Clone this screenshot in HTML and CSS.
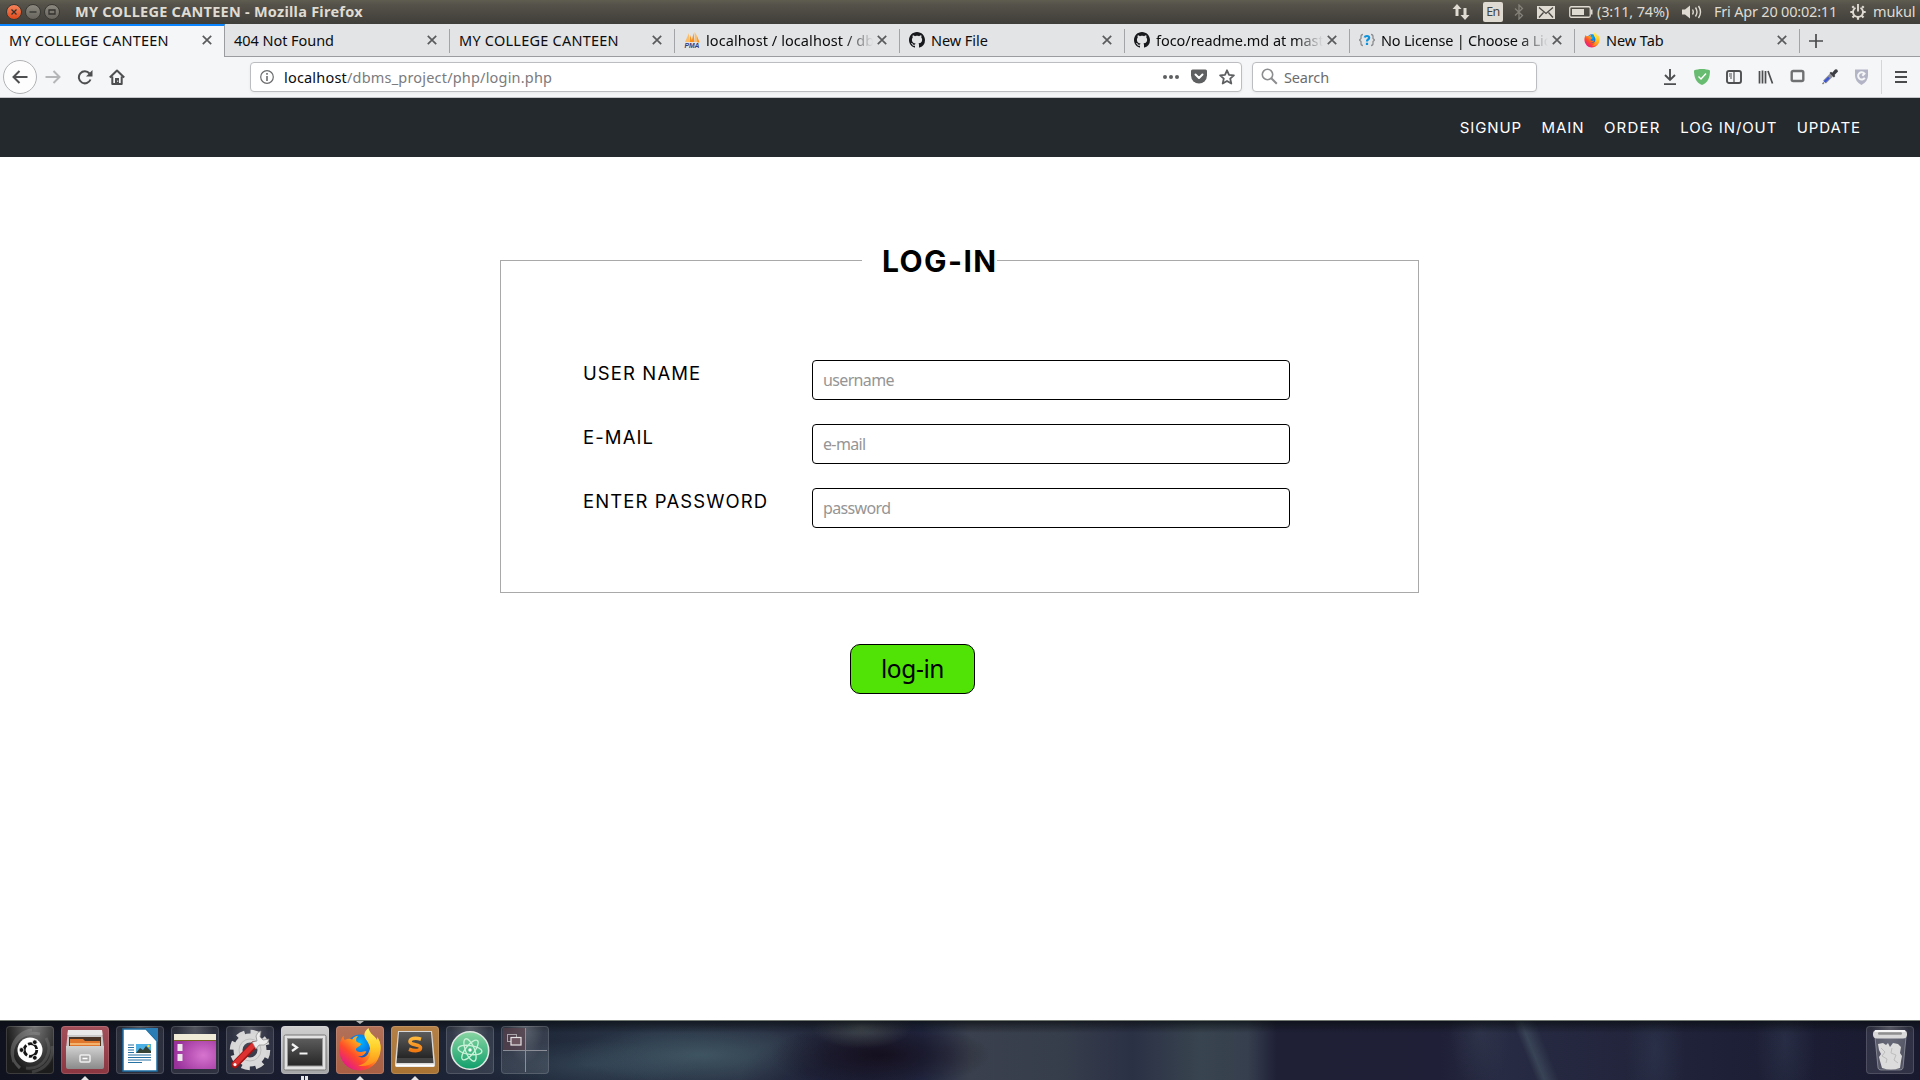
FILE: index.html
```html
<!DOCTYPE html>
<html lang="en">
<head>
<meta charset="utf-8">
<title>MY COLLEGE CANTEEN</title>
<link rel="stylesheet" href="styles.css">
</head>
<body>
<svg class="defs" width="0" height="0" aria-hidden="true">
  <defs>
    <linearGradient id="fox" x1=".85" y1=".1" x2=".15" y2=".8"><stop offset="0" stop-color="#ffe03a"/><stop offset=".4" stop-color="#ff9a1e"/><stop offset=".7" stop-color="#ff4a2a"/><stop offset="1" stop-color="#e8207c"/></linearGradient>
    <radialGradient id="globe" cx=".5" cy=".3" r=".7"><stop offset="0" stop-color="#00b8ff"/><stop offset=".6" stop-color="#0a6fe0"/><stop offset="1" stop-color="#21338f"/></radialGradient>
    <linearGradient id="tail" x1="0" y1="0" x2="0" y2="1"><stop offset="0" stop-color="#fff36b"/><stop offset=".5" stop-color="#ffd02a"/><stop offset="1" stop-color="#ff8a1c"/></linearGradient>
    <linearGradient id="silver" x1="0" y1="0" x2="0" y2="1"><stop offset="0" stop-color="#d2d2d2"/><stop offset="1" stop-color="#8a8a8a"/></linearGradient>
    <linearGradient id="dark" x1="0" y1="0" x2="0" y2="1"><stop offset="0" stop-color="#5c5c5c"/><stop offset="1" stop-color="#262626"/></linearGradient>
    <linearGradient id="atom" x1="0" y1="0" x2="0" y2="1"><stop offset="0" stop-color="#8ad5a2"/><stop offset="1" stop-color="#0f9f6b"/></linearGradient>
    <linearGradient id="gold" x1="0" y1="0" x2="0" y2="1"><stop offset="0" stop-color="#ffb83c"/><stop offset="1" stop-color="#f27a12"/></linearGradient>
    <radialGradient id="purple" cx=".7" cy=".6" r=".7"><stop offset="0" stop-color="#d774cf"/><stop offset="1" stop-color="#99319b"/></radialGradient>
    <symbol id="i-close" viewBox="0 0 10 10"><path d="M.8.8l8.400 8.400M9.200.8L.8 9.200" fill="none" stroke="#5a5b5d" stroke-width="1.700"/></symbol>
    <symbol id="i-github" viewBox="0 0 16 16"><path fill="#17191c" d="M8 0C3.58 0 0 3.58 0 8c0 3.54 2.29 6.53 5.47 7.59.4.07.55-.17.55-.38 0-.19-.01-.82-.01-1.49-2.01.37-2.53-.49-2.69-.94-.09-.23-.48-.94-.82-1.13-.28-.15-.68-.52-.01-.53.63-.01 1.08.58 1.23.82.72 1.21 1.87.87 2.33.66.07-.52.28-.87.51-1.07-1.78-.2-3.64-.89-3.64-3.95 0-.87.31-1.59.82-2.15-.08-.2-.36-1.02.08-2.12 0 0 .67-.21 2.2.82.64-.18 1.32-.27 2-.27s1.36.09 2 .27c1.53-1.04 2.2-.82 2.2-.82.44 1.1.16 1.92.08 2.12.51.56.82 1.27.82 2.15 0 3.07-1.87 3.75-3.65 3.95.29.25.54.73.54 1.48 0 1.07-.01 1.93-.01 2.2 0 .21.15.46.55.38A8.01 8.01 0 0 0 16 8c0-4.42-3.58-8-8-8z"/></symbol>
    <symbol id="i-firefox" viewBox="0 0 42 44">
      <circle cx="21" cy="20" r="13.500" fill="url(#globe)"/>
      <path fill="url(#fox)" d="M4.500 7.500c0 2.500.3 3.500 1.200 4.500 3-1.500 5.500-1.500 7.500-.5 1-2 3-3.500 6-3.700-2 2-2.500 3.700-1.800 5.700 1 1.500 4 1 4.500 2.500 0 2-4 3-5 5 0 2 1.500 3 4 3 2.500 0 4-1.500 6.500-.5-2 4-5 5.500-9 4.500 5 3 10 1 11.500-4.500 3-6 1-11-2.500-14.500 5 1 9 3 11.500 6.500l.3-4.500C43 17 42.500 27 37 34.500 29 44.500 14 45 6 36.500-1.500 28-1.500 15.500 4.500 7.500z"/>
      <path fill="url(#tail)" d="M29.500 0c-4 3-5.500 7-2.500 11.500 4 5.500 6 12 3 18.500-2.500 4.500-7 7-11 7.500 11 2.500 20-4 22-14 1-6 0-10-2.500-14.500L38 12C36.500 8 30.500 6 29.500 0z"/>
    </symbol>
  </defs>
</svg>

<header class="panel">
  <div class="winbtns">
    <span class="winbtn winbtn-close"><svg width="14" height="14" viewBox="0 0 14 14"><path d="M4.500 4.500l5 5M9.500 4.500l-5 5"/></svg></span>
    <span class="winbtn"><svg width="14" height="14" viewBox="0 0 14 14"><path d="M3.500 7h7"/></svg></span>
    <span class="winbtn"><svg width="14" height="14" viewBox="0 0 14 14"><path d="M4 5h6v4H4z"/></svg></span>
  </div>
  <span class="wintitle">MY COLLEGE CANTEEN - Mozilla Firefox</span>
  <div class="tray">
    <svg class="tray-net" width="18" height="18" viewBox="0 0 18 18" fill="#dfdbd2"><path d="M5 1L9.500 6H6.500v7h-3V6H.5zM13 17L8.500 12h3V5h3v7h3z"/></svg>
    <span class="tray-lang">En</span>
    <svg class="tray-bt" width="10" height="16" viewBox="0 0 10 16" fill="none" stroke="#85827a" stroke-width="1.300"><path d="M1 4.500l7.500 7L5 15V1l3.500 3.500L1 11.500"/></svg>
    <svg class="tray-mail" width="18" height="13" viewBox="0 0 18 13"><path fill="#dfdbd2" d="M0 0h18v13H0z"/><path d="M2 1.500l7 6 7-6M2 11.500l4.500-5M16 11.500l-4.500-5" fill="none" stroke="#4b4943" stroke-width="1.300"/></svg>
    <svg class="tray-bat" width="24" height="12" viewBox="0 0 24 12"><rect x=".75" y=".75" width="20.500" height="10.500" rx="1.500" fill="none" stroke="#dfdbd2" stroke-width="1.300"/><path fill="#dfdbd2" d="M3 3h12v6H3zM22 3.500h1.500v5H22z"/></svg>
    <span class="tray-pct">(3:11, 74%)</span>
    <svg class="tray-vol" width="20" height="16" viewBox="0 0 20 16"><path fill="#dfdbd2" d="M0 5.500h3L8 1.500v13l-5-4H0z"/><path d="M10.500 5.500q1.500 2.500 0 5M13.500 3.500q3 4.500 0 9M16.500 2q4 6 0 12" fill="none" stroke="#dfdbd2" stroke-width="1.400"/></svg>
    <span class="tray-clock">Fri Apr 20 00:02:11</span>
    <svg class="tray-gear" width="16" height="16" viewBox="0 0 16 16" fill="none" stroke="#dfdbd2"><path d="M5.500 3.700A5 5 0 1 0 10.500 3.700" stroke-width="1.900"/><path d="M8 0v7.500" stroke-width="1.900"/><path d="M3.800 3.800L2.300 2.300M12.200 3.800L13.700 2.300M3 8H.3M13 8H15.700M4.300 11.700l-1.800 1.800M11.700 11.700l1.800 1.800M8 13V15.700" stroke-width="2.200"/></svg>
    <span class="tray-user">mukul</span>
  </div>
</header>

<nav class="tabs">
  <div class="tab tab-active"><span class="tab-label caps">MY COLLEGE CANTEEN</span><svg class="tab-x"><use href="#i-close"/></svg></div>
  <div class="tab"><span class="tab-label">404 Not Found</span><svg class="tab-x"><use href="#i-close"/></svg></div>
  <div class="tab"><span class="tab-label caps">MY COLLEGE CANTEEN</span><svg class="tab-x"><use href="#i-close"/></svg></div>
  <div class="tab"><svg class="tab-ico" viewBox="0 0 16 16"><path fill="#fbbd6a" d="M5 1v9H1zM10.500 0l2 3 2.500 7h-4z"/><path fill="#f78f1e" d="M6 3l2.500 7H5.500zM9.500 1l1 9H7.500zM13 4l2.500 6.500h-2z"/><text class="pma" x=".5" y="16" textLength="15" lengthAdjust="spacingAndGlyphs">PMA</text></svg><span class="tab-label tab-fade db">localhost / localhost / dbms</span><svg class="tab-x"><use href="#i-close"/></svg></div>
  <div class="tab"><svg class="tab-ico"><use href="#i-github"/></svg><span class="tab-label">New File</span><svg class="tab-x"><use href="#i-close"/></svg></div>
  <div class="tab"><svg class="tab-ico"><use href="#i-github"/></svg><span class="tab-label tab-fade">foco/readme.md at master</span><svg class="tab-x"><use href="#i-close"/></svg></div>
  <div class="tab"><svg class="tab-ico" viewBox="0 0 16 16" fill="none" stroke-width="1.300"><path stroke="#8b8d90" d="M4 2.500q-2 0-2 2v2L.5 8 2 9.500v2q0 2 2 2M12 2.500q2 0 2 2v2L15.500 8 14 9.500v2q0 2-2 2"/><path stroke="#0c93dc" stroke-width="2.200" d="M5.700 5.500Q6 4 8 4t2.200 1.800Q10.200 7 8.500 8 8 8.300 8 9.500M8 10.800V13"/></svg><span class="tab-label tab-fade lic">No License | Choose a License</span><svg class="tab-x"><use href="#i-close"/></svg></div>
  <div class="tab"><svg class="tab-ico"><use href="#i-firefox"/></svg><span class="tab-label">New Tab</span><svg class="tab-x"><use href="#i-close"/></svg></div>
  <svg class="tab-new" width="14" height="14" viewBox="0 0 14 14"><path d="M7 0v14M0 7h14" stroke="#4a4b4d" stroke-width="1.700"/></svg>
</nav>

<div class="toolbar">
  <span class="back"><svg width="16" height="16" viewBox="0 0 16 16"><path d="M15.500 8H1.500M7.500 2L1.500 8l6 6" fill="none" stroke="#4e4f51" stroke-width="2"/></svg></span>
  <svg class="fwd" width="16" height="16" viewBox="0 0 16 16"><path d="M.5 8h14M8.500 2l6 6-6 6" fill="none" stroke="#b5b6b8" stroke-width="2"/></svg>
  <svg class="reload" width="16" height="16" viewBox="0 0 16 16"><path d="M13.500 10.500A6 6 0 1 1 12.500 4.500" fill="none" stroke="#4e4f51" stroke-width="2"/><path fill="#4e4f51" d="M15.500 1v6.500H9z"/></svg>
  <svg class="home" width="16" height="16" viewBox="0 0 16 16"><path d="M.8 8.500L8 1.500l7.200 7M3.300 7.500V15h9.400V7.500" fill="none" stroke="#4e4f51" stroke-width="2" stroke-linejoin="round"/><path fill="#4e4f51" d="M6 9h4v6H6z"/><path fill="#f5f6f7" d="M8.300 11.500h.9v1.500h-.9z"/></svg>
  <div class="field urlbar">
    <svg width="14" height="14" viewBox="0 0 14 14"><circle cx="7" cy="7" r="6.300" fill="none" stroke="#6b6c6e" stroke-width="1.200"/><path d="M7 3v1.700M7 6v5" stroke="#6b6c6e" stroke-width="1.600"/></svg>
    <span class="url"><b>localhost</b>/dbms_project/php/login.php</span>
    <svg width="16" height="4" viewBox="0 0 16 4" fill="#5e5f61"><circle cx="2" cy="2" r="2"/><circle cx="8" cy="2" r="2"/><circle cx="14" cy="2" r="2"/></svg>
    <svg width="16" height="15" viewBox="0 0 16 15"><path fill="#5e5f61" d="M1.500.5h13q1.500 0 1.500 1.500v4.500a8 8 0 0 1-16 0V2Q0 .5 1.500.5z"/><path d="M4.500 5.500L8 9l3.500-3.500" fill="none" stroke="#fff" stroke-width="2" stroke-linecap="round" stroke-linejoin="round"/></svg>
    <svg width="16" height="16" viewBox="0 0 16 16"><path d="M8 1.300l2 4.500 4.900.5-3.700 3.300 1.100 4.900L8 12l-4.300 2.500 1.100-4.900L1.100 6.300 6 5.800z" fill="none" stroke="#5e5f61" stroke-width="1.800" stroke-linejoin="round"/></svg>
  </div>
  <div class="field search">
    <svg width="17" height="17" viewBox="0 0 17 17"><circle cx="6.500" cy="6.500" r="5.200" fill="none" stroke="#8c8d8f" stroke-width="1.600"/><path d="M10.300 10.300l5.500 5.500" stroke="#8c8d8f" stroke-width="2"/></svg>
    <span>Search</span>
  </div>
  <div class="tools">
    <svg width="16" height="16" viewBox="0 0 16 16"><path d="M8 0v11M3 6l5 5 5-5M2 15.200h12" fill="none" stroke="#4e4f51" stroke-width="1.900"/></svg>
    <svg width="16" height="16" viewBox="0 0 16 16"><path fill="#68bc71" d="M8 0c3 0 6 .5 8 1.500 0 7-2 12-8 14.500C2 13.500 0 8.500 0 1.500 2 .5 5 0 8 0z"/><path d="M4.500 7.500L7 10l5-5.500" fill="none" stroke="#fff" stroke-width="1.400"/></svg>
    <svg width="16" height="16" viewBox="0 0 16 16"><rect x="1" y="2" width="14" height="12" rx="2" fill="none" stroke="#4e4f51" stroke-width="1.900"/><path d="M8 2v12M3 5h3M3 7h3M4 9h2" stroke="#4e4f51" stroke-width="1.200"/></svg>
    <svg width="16" height="16" viewBox="0 0 16 16"><path d="M1.500 2v12.500M4.500 1.500v13M7.500 2v12.500M10 2l4.500 12.500" fill="none" stroke="#4e4f51" stroke-width="1.700"/></svg>
    <svg width="16" height="16" viewBox="0 0 16 16"><rect x="1.700" y="2" width="11.600" height="10" rx="1.500" fill="none" stroke="#6f7072" stroke-width="2.400"/></svg>
    <svg width="16" height="16" viewBox="0 0 16 16"><path d="M9.500 6L2.500 13" stroke="#8d9099" stroke-width="4"/><path d="M7 8.500L2.500 13" stroke="#3a55d8" stroke-width="2.400"/><path d="M2 13.500L.5 15" stroke="#777" stroke-width="1.500"/><path fill="#3c3d42" d="M7.500 4L9 2.800l1.200 1L13 .5q2.500-1 3 2L12.500 6l.8 1-1.400 1.400z"/></svg>
    <svg width="16" height="16" viewBox="0 0 16 16"><path fill="#b3b4c6" d="M1 .5h13v6q0 6-6.500 9.500Q1 12.500 1 6.500z"/><path d="M10.800 8.800A3.600 3.600 0 1 1 10.500 4.600L8.300 6.800" fill="none" stroke="#f5f6f7" stroke-width="2"/></svg>
  </div>
  <svg class="menu" width="12" height="12" viewBox="0 0 12 12"><path d="M0 1h12M0 6h12M0 11h12" stroke="#4a4b4d" stroke-width="1.900"/></svg>
</div>

<div class="sitebar">
  <a>SIGNUP</a><a>MAIN</a><a class="order">ORDER</a><a>LOG IN/OUT</a><a>UPDATE</a>
</div>

<main class="page">
  <form class="login">
    <fieldset class="box">
      <legend class="legend">LOG-IN</legend>
      <div class="row"><label>USER NAME</label><div class="input">username</div></div>
      <div class="row"><label>E-MAIL</label><div class="input">e-mail</div></div>
      <div class="row"><label>ENTER PASSWORD</label><div class="input">password</div></div>
    </fieldset>
    <button class="submit" type="button">log-in</button>
  </form>
</main>

<footer class="dock">
  <span class="tile tile-dash"><svg width="48" height="48" viewBox="0 0 48 48"><g fill="none" stroke="#999" stroke-opacity=".4" stroke-width="3"><path d="M8 36C2 18 16 4 34 8M14 42C-2 28 8 6 26 4"/><path d="M40 12c8 14-2 32-20 30M46 20c2 14-8 24-20 26" stroke-opacity=".25"/></g><circle cx="24" cy="24" r="12.500" fill="#fff"/><circle cx="24.500" cy="24" r="6.300" fill="none" stroke="#151515" stroke-width="2.800" stroke-dasharray="11.200 2"/><g fill="#151515" stroke="#fff" stroke-width=".8"><circle cx="15.500" cy="24" r="2.400"/><circle cx="28.800" cy="16.200" r="2.400"/><circle cx="28.800" cy="31.800" r="2.400"/></g></svg></span>
  <span class="tile tile-files up"><svg width="48" height="48" viewBox="0 0 48 48"><path fill="#c9c9c9" d="M7 4h34l2 19H5z"/><path fill="#e9e9e9" d="M7 4h34l.5 5h-35z"/><path fill="#4a3527" d="M8 11h32v11H8z"/><path fill="#e0762b" d="M9 13h13l2 2h15v7H9z"/><path fill="#f3b26d" d="M9 17h30v2H9z"/><path fill="url(#silver)" d="M5 20h38v21q0 2-2 2H7q-2 0-2-2z"/><rect x="19" y="29" width="10" height="7" rx="1" fill="#aaa" stroke="#eee" stroke-width="1.500"/><path d="M21.500 32.500h5" stroke="#fff" stroke-width="1.500"/></svg></span>
  <span class="tile"><svg width="48" height="48" viewBox="0 0 48 48"><path fill="#fff" stroke="#1c6ea4" stroke-width="1.500" d="M7 3h23l11 12v30H7z"/><path fill="#2a7db5" d="M29 2h13v14z"/><path stroke="#2672a4" stroke-width="1.200" d="M12 19h6M12 21.500h6M12 24h6M12 26.500h6M12 29h23M12 31.500h23M12 34h23M12 36.500h14"/><path fill="#4db0e4" d="M20 18h15v9H20z"/><path fill="#364438" d="M20 27l4-5 3 2 3-4 5 5v2z"/><circle cx="32.500" cy="20" r="1.200" fill="#ffe04a"/></svg></span>
  <span class="tile"><svg width="48" height="48" viewBox="0 0 48 48"><path fill="url(#purple)" d="M3 9h42v34H3z"/><path fill="#efe9d8" d="M3 8h42v6H3z"/><path d="M3 14.500h42" stroke="#77631f"/><path fill="#ece8ea" d="M6.500 18h5v7h-5zM6.500 28h5v7h-5z"/></svg></span>
  <span class="tile"><svg width="48" height="48" viewBox="0 0 48 48"><circle cx="24" cy="24" r="17.500" fill="none" stroke="#d6d6d6" stroke-width="5.500" stroke-dasharray="8 5.744"/><circle cx="24" cy="24" r="12" fill="none" stroke="#d9d9d9" stroke-width="9"/><circle cx="24" cy="24" r="11" fill="none" stroke="#bdbdbd"/><path d="M9 38.500L28 19" stroke="#9f1414" stroke-width="7.500" stroke-linecap="round"/><path d="M9 38L28 18.500" stroke="#dd3030" stroke-width="5" stroke-linecap="round"/><circle cx="9" cy="38.500" r="1.500" fill="#fff"/><path fill="#ececec" stroke="#8a8a8a" stroke-width=".7" d="M26 16l5-1-1-5q1-4 5-5l-1 6 3 3 6-1q-1 5-5 6l-5 0-3 4z"/></svg></span>
  <span class="tile tile-term up up2"><svg width="48" height="48" viewBox="0 0 48 48"><rect x="3" y="9" width="42" height="35" rx="1.500" fill="#e2e2e2" stroke="#777"/><rect x="6.500" y="12.500" width="35" height="27.500" fill="url(#dark)" stroke="#999"/><path d="M11 18l5 3.500-5 3.500M18.500 27.500h8" fill="none" stroke="#f4f4f4" stroke-width="2.200"/></svg></span>
  <span class="tile tile-fox up down"><svg width="42" height="44"><use href="#i-firefox"/></svg></span>
  <span class="tile tile-subl up"><svg width="48" height="48" viewBox="0 0 48 48"><path fill="#d8d8d8" d="M7 5h34l3 32q0 4-2 4H6q-2 0-2-4z"/><path fill="url(#dark)" d="M8 6h32l2 26H6z"/><path fill="#444" d="M6 32h36l.5 5h-37z"/><path d="M4.500 39.500h39" stroke="#fff" stroke-width="2"/><path d="M30 13.200c-6-2-11-.7-11 2.600 0 3.700 10.500 2.300 10.500 6 0 3.200-5.500 3.700-11.500 1.400" fill="none" stroke="url(#gold)" stroke-width="3.600"/></svg></span>
  <span class="tile"><svg width="48" height="48" viewBox="0 0 48 48"><circle cx="24" cy="24.500" r="18.700" fill="url(#atom)" stroke="#dfe8e2" stroke-width="1.600"/><g fill="none" stroke="#c9f2d8" stroke-width="1.300"><ellipse cx="24" cy="24" rx="12" ry="4.500" transform="rotate(8 24 24)"/><ellipse cx="24" cy="24" rx="12" ry="4.500" transform="rotate(68 24 24)"/><ellipse cx="24" cy="24" rx="12" ry="4.500" transform="rotate(128 24 24)"/></g><circle cx="24" cy="24" r="1.700" fill="#fff"/></svg></span>
  <span class="tile"><svg width="48" height="48" viewBox="0 0 48 48"><path fill="#5b3f4a" fill-opacity=".6" d="M2 2h22v22H2z"/><path d="M24.500 2v44M2 24.500h44" stroke="#8b8d97" stroke-width="1"/><rect x="6.500" y="8.500" width="9" height="7" fill="none" stroke="#a9a4a8"/><rect x="10" y="11.500" width="10" height="7.500" fill="#6d5560" stroke="#e6e3e4" stroke-width="1.200"/></svg></span>
  <span class="tile tile-trash"><svg width="48" height="48" viewBox="0 0 48 48"><path fill="#a8adb3" fill-opacity=".3" stroke="#c9cbcf" stroke-opacity=".6" stroke-width=".8" d="M9 11h31l-3 31q-.5 2-3 2H15q-2.500 0-3-2z"/><path fill="#dcdcdc" d="M12 18l5-1 3 2 2-2 2 4 3-4 5 1 3 3-1 6 2 3-1 5-1 7q-9 3-18 0l-2-7-1-4 2-3-2-4z"/><path d="M15 22l4 4-3 4 5 3-1 4M26 22l-1 5 5 2-2 5 4 3" fill="none" stroke="#bdbdbd" stroke-width="1"/><rect x="7" y="4" width="34" height="8.500" rx="4" fill="#d9d9d9"/><rect x="12" y="6.300" width="24" height="2.500" rx="1.200" fill="#8f8f8f"/><path d="M9 5h30" stroke="#fff" stroke-width="1.500"/></svg></span>
</footer>
</body>
</html>
```
FILE: styles.css
```css
* { box-sizing: border-box; }

body {
  margin: 0;
  width: 1920px;
  height: 1080px;
  overflow: hidden;
  display: flex;
  flex-direction: column;
  background: #fff;
  color: #0c0c0d;
  font: 14.5px/20px "Noto Sans", sans-serif;
  white-space: nowrap;
}

svg { display: block; flex: none; }
.defs { position: absolute; }

/* Desktop panel */
.panel {
  height: 24px;
  flex: none;
  display: flex;
  align-items: center;
  padding: 0 4px 0 6px;
  background: linear-gradient(#5f5c50, #55524a 20%, #403e39);
  color: #dfdbd2;
}
.winbtns { display: flex; gap: 3px; }
.winbtn {
  width: 16px;
  height: 16px;
  border: 1px solid #3a3833;
  border-radius: 50%;
  background: linear-gradient(#8b897f, #66645c);
}
.winbtn svg { fill: none; stroke: #34322e; stroke-width: 1.3; }
.winbtn-close { background: linear-gradient(#f5845b, #df4a1c); }
.wintitle { margin-left: 15px; padding-bottom: 2px; font-weight: 700; letter-spacing: .26px; }
.tray { display: flex; align-items: center; margin-left: auto; }
.tray-net { margin-right: 1px; }
.tray-lang {
  width: 20px;
  height: 20px;
  margin: 0 11px 0 12px;
  border-radius: 2px;
  background: #dfdbd2;
  color: #45433d;
  font: 12.5px/20px "Noto Sans", sans-serif;
  letter-spacing: -.6px;
  text-align: center;
}
.tray-mail { margin: 0 14px 0 13px; }
.tray-pct, .tray-clock, .tray-user { padding-bottom: 2px; }
.tray-pct { width: 72px; margin: 0 13px 0 4px; letter-spacing: -.16px; }
.tray-clock { width: 123px; margin: 0 13px 0 12px; letter-spacing: -.2px; }
.tray-user { width: 43px; margin-left: 7px; letter-spacing: -.1px; }

/* Browser tabs */
.tabs {
  height: 33px;
  flex: none;
  display: flex;
  align-items: stretch;
  background: #e3e4e6;
  box-shadow: inset 0 -1px #9b9c9f;
}
.tab {
  width: 225px;
  flex: none;
  display: flex;
  align-items: center;
  padding: 0 13px 1px 9px;
  background: linear-gradient(#a3a4a7, #a3a4a7) right 5px / 1px 24px no-repeat;
}
.tab-active {
  border-top: 2px solid #0a84ff;
  border-right: 1px solid #9b9c9f;
  background: #f5f6f7;
  padding-right: 12px;
  padding-bottom: 3px;
}
.tab-label { flex: 1; min-width: 0; letter-spacing: -.05px; }
.caps { letter-spacing: .23px; }
.db { letter-spacing: .08px; }
.lic { letter-spacing: -.2px; }
.tab-ico { width: 16px; height: 16px; margin-right: 6px; }
.tab-x { width: 10px; height: 10px; margin-left: 4px; }
.tab-fade {
  overflow: hidden;
  -webkit-mask-image: linear-gradient(to left, transparent, #000 28px);
  mask-image: linear-gradient(to left, transparent, #000 28px);
}
.pma { font: italic 700 6.5px "Liberation Sans", sans-serif; fill: #3a3a78; }
.tab-new { align-self: center; margin-left: 9px; }

/* Browser toolbar */
.toolbar {
  height: 41px;
  flex: none;
  display: flex;
  align-items: center;
  padding: 0 13px 1px 3px;
  background: #f5f6f7;
  border-bottom: 1px solid #c4c5c8;
}
.back {
  width: 34px;
  height: 34px;
  display: grid;
  place-items: center;
  border: 1px solid #b1b2b5;
  border-radius: 50%;
  background: #fdfdfd;
}
.fwd { margin-left: 8px; }
.reload, .home { margin-left: 16px; }
.field {
  height: 30px;
  display: flex;
  align-items: center;
  border: 1px solid #bcbdc0;
  border-radius: 4px;
  background: #fff;
  box-shadow: 0 1px 3px rgba(0, 0, 0, .06);
}
.urlbar { width: 992px; margin-left: 125px; padding: 0 6px 0 9px; gap: 12px; }
.url { flex: 1; margin-left: -2px; color: #7b7b7d; letter-spacing: .19px; }
.url b { font-weight: 400; color: #0c0c0d; }
.search { width: 285px; margin-left: 10px; padding-left: 8px; gap: 6px; color: #6c6c6e; letter-spacing: -.15px; }
.tools { display: flex; gap: 16px; margin-left: 125px; }
.menu { box-sizing: content-box; margin-left: auto; padding: 11px 0 11px 13px; border-left: 1px solid #d5d6d9; }

/* Canteen site */
.sitebar {
  height: 59px;
  flex: none;
  display: flex;
  align-items: center;
  justify-content: flex-end;
  gap: 19.5px;
  padding: 0 59px 0 0;
  background: #24292e;
  color: #fff;
  font: 15px/20px Inter, sans-serif;
  letter-spacing: .9px;
}
.order { letter-spacing: 1.25px; }
.page { height: 863px; flex: none; padding: 87px 0 0 500px; }
.login { width: 919px; }
.box {
  height: 349px;
  margin: 0;
  padding: 83px 128px 0 82px;
  border: 1px solid #a9a9a9;
}
.legend {
  margin-left: 279px;
  padding: 1px 0 0 20px;
  color: #000;
  font: 700 30px/32px Inter, sans-serif;
  letter-spacing: 1.4px;
}
.row { display: flex; height: 40px; margin-bottom: 24px; font: 18.5px/26px Inter, sans-serif; letter-spacing: 1.1px; color: #000; }
.row label { width: 229px; }
.input {
  width: 478px;
  height: 40px;
  padding-left: 10px;
  border: 1px solid #000;
  border-radius: 4px;
  color: #959595;
  font: 16px/38px "Noto Sans", sans-serif;
  letter-spacing: -.65px;
}
.submit {
  width: 125px;
  height: 50px;
  margin: 51px 0 0 350px;
  padding: 0;
  border: 1px solid #000;
  border-radius: 10px;
  background: #50e305;
  color: #000;
  font: 24.5px/46px "Noto Sans", sans-serif;
  letter-spacing: -.4px;
}

/* Launcher */
.dock {
  height: 60px;
  flex: none;
  display: flex;
  gap: 7px;
  padding: 5px 6px 0;
  border-top: 1px solid #727a72;
  background:
    linear-gradient(rgba(10, 14, 18, .7), transparent 12px),
    radial-gradient(50px 22px at 862px 6px, rgba(84, 94, 92, .7), transparent),
    radial-gradient(110px 34px at 880px 34px, rgba(20, 14, 28, .9), transparent),
    radial-gradient(90px 50px at 830px 60px, rgba(27, 30, 54, .8), transparent),
    radial-gradient(130px 30px at 700px 34px, rgba(72, 98, 108, .7), transparent),
    radial-gradient(110px 24px at 590px 44px, rgba(62, 84, 100, .5), transparent),
    linear-gradient(68deg, transparent 1424px, rgba(76, 94, 108, .5) 1432px, transparent 1446px),
    radial-gradient(30px 60px at 1480px 10px, rgba(54, 62, 84, .5), transparent),
    radial-gradient(30px 80px at 1655px 30px, rgba(50, 60, 84, .5), transparent),
    radial-gradient(30px 80px at 1785px 20px, rgba(50, 60, 84, .5), transparent),
    linear-gradient(90deg, #10121f, #191d2f 15%, #1f2839 28%, #293547 34%, #2b3446 40%, #1f2238 45%, #222843 48%, #3a404d 50.500%, #373e4b 55%, #2b3145 59%, #38444f 62.500%, #363f4e 65%, #1f2036 66.500%, #1f2037 75%, #272b43 78%, #1e2037 90%, #191a30);
}
.tile {
  position: relative;
  width: 48px;
  height: 48px;
  flex: none;
  display: grid;
  place-items: center;
  border-radius: 4px;
  background: radial-gradient(ellipse at 50% 0, rgba(255, 255, 255, .28), rgba(255, 255, 255, .1) 55%);
  box-shadow: inset 0 0 0 1px rgba(255, 255, 255, .14);
}
.tile-dash { background: radial-gradient(ellipse at 60% 0, #777, #1c1c1c 70%); }
.tile-files { background: linear-gradient(#a4505a, #8b3640); }
.tile-term { background: linear-gradient(#cfcfcf, #a5a5a8); }
.tile-fox { background: linear-gradient(#b37159, #a95f43); }
.tile-subl { background: linear-gradient(#b58046, #a97433); }
.tile-trash { margin-left: auto; }

/* Running-window markers */
.up::after, .down::before {
  content: "";
  position: absolute;
  left: 20px;
  border: 4px solid transparent;
}
.up::after { top: 46px; border-bottom: 4px solid #e4e4e4; }
.down::before { top: -5px; border-bottom: 0; border-top: 3px solid #b8b8b8; }
.up2::after {
  left: 20px;
  top: 50px;
  width: 7px;
  height: 4px;
  border: 0;
  background: linear-gradient(90deg, #e4e4e4 3px, transparent 3px 4px, #e4e4e4 4px);
}
```
